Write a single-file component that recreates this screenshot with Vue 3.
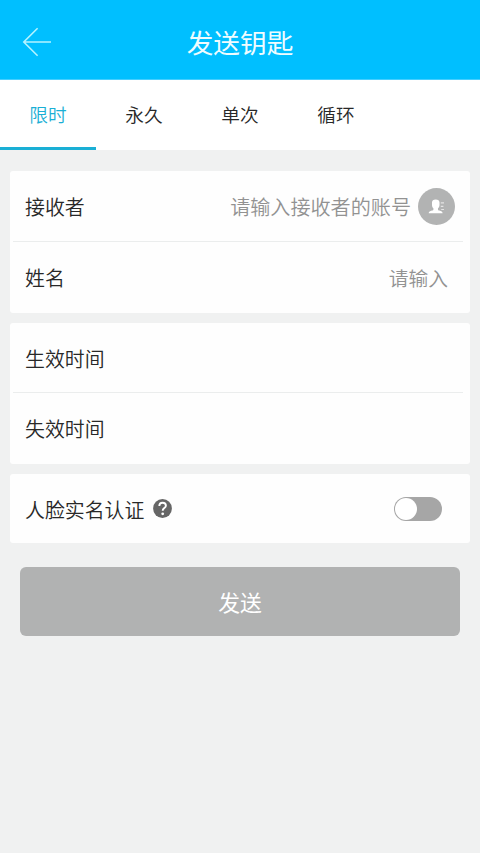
<script setup>
import { ref } from 'vue'

const tabs = ['限时', '永久', '单次', '循环']
const activeTab = ref('限时')
const receiver = ref('')
const fullName = ref('')
const faceAuth = ref(false)
</script>

<template>
  <div class="page">
    <header class="header">
      <button class="back" aria-label="返回">
        <svg width="30" height="30" viewBox="0 0 30 30" fill="none" stroke="#b5f3ff" stroke-width="1.6">
          <path d="M15.6 1.3 1.8 15l13.8 13.7M1.8 15H29" />
        </svg>
      </button>
      <h1 class="title">发送钥匙</h1>
    </header>

    <nav class="tabs">
      <button
        v-for="tab in tabs"
        :key="tab"
        class="tab"
        :class="{ active: tab === activeTab }"
        @click="activeTab = tab"
      >{{ tab }}</button>
    </nav>

    <main class="content">
      <section class="card">
        <label class="row row-first">
          <span class="label">接收者</span>
          <input v-model="receiver" class="field" placeholder="请输入接收者的账号" />
          <span class="contact">
            <svg width="37" height="37" viewBox="0 0 37 37">
              <circle cx="18.5" cy="18.5" r="18.5" fill="#b2b3b3" />
              <path
                d="M14 14.5C14 12.600 15.300 11.500 17.700 11.500S21.500 12.600 21.500 14.500V17C21.500 18.600 20.800 19.600 20 20.300V21.400C20 22 20.500 22.200 21.300 22.500C23.300 23.100 24.600 23.600 24.600 25.300H10.700C10.700 23.600 12 23.100 14 22.500C14.900 22.200 15.400 22 15.400 21.400V20.300C14.600 19.600 14 18.600 14 17Z"
                fill="#fff"
              />
              <path d="M22.800 14.800h3.200M22.800 18.300h2.600M23.200 21.500h2.800" stroke="#e4e4e4" stroke-width="1.200" />
            </svg>
          </span>
        </label>
        <label class="row">
          <span class="label">姓名</span>
          <input v-model="fullName" class="field name-field" placeholder="请输入" />
        </label>
      </section>

      <section class="card time-card">
        <div class="row row-first"><span class="label">生效时间</span></div>
        <div class="row"><span class="label">失效时间</span></div>
      </section>

      <section class="card auth-card">
        <div class="row">
          <span class="label">人脸实名认证</span>
          <svg class="help" width="19" height="19" viewBox="0 0 19 19">
            <circle cx="9.5" cy="9.5" r="9.4" fill="#666" />
            <path
              d="M6.300 7.100c0-2.200 1.300-3.400 3.300-3.400s3.300 1.100 3.300 3c0 2.400-3.200 2.400-3.200 5"
              fill="none" stroke="#fff" stroke-width="1.900"
            />
            <circle cx="9.7" cy="14.8" r="1.4" fill="#fff" />
          </svg>
          <button
            class="switch"
            :class="{ on: faceAuth }"
            role="switch"
            :aria-checked="faceAuth"
            @click="faceAuth = !faceAuth"
          ><span class="knob"></span></button>
        </div>
      </section>

      <button class="submit">发送</button>
    </main>
  </div>
</template>

<style>
body {
  background: #f0f1f1;
}
</style>

<style scoped>
.page {
  min-height: 853px;
  background: #f0f1f1;
  color: #282828;
  font-family: "Noto Sans CJK SC", sans-serif;
  font-weight: 350;
}
button {
  padding: 0;
  border: 0;
  background: none;
  font-family: inherit;
  font-weight: inherit;
  color: inherit;
}
.header {
  display: grid;
  grid-template-columns: 60px 1fr 60px;
  align-items: center;
  box-sizing: border-box;
  height: 80px;
  padding-top: 4px;
  background: #00bfff;
  border-bottom: 1px solid #45ceff;
}
.back {
  display: flex;
  padding-left: 22px;
}
.title {
  margin: 0;
  padding-top: 1px;
  font-size: 26.7px;
  line-height: 40px;
  font-weight: 400;
  text-align: center;
  color: #effcff;
}
.tabs {
  display: flex;
  height: 70px;
  background: #fff;
}
.tab {
  box-sizing: border-box;
  width: 96px;
  border-bottom: 3px solid transparent;
  font-size: 18.7px;
}
.tab.active {
  color: #1aafd5;
  border-bottom-color: #1aafd5;
}
.content {
  display: flex;
  flex-direction: column;
  gap: 10px;
  padding: 21px 10px 0;
}
.card {
  height: 142px;
  border-radius: 3px;
  background: #fefefe;
}
.time-card {
  height: 141px;
}
.auth-card {
  height: 69px;
}
.row {
  display: flex;
  align-items: center;
  box-sizing: border-box;
  height: 70px;
  margin: 0 7px 0 3px;
  padding: 0 5px 0 12px;
}
.row-first {
  height: 71px;
  border-bottom: 1px solid #ebeded;
}
.time-card .row-first {
  height: 70px;
}
.auth-card .row {
  height: 69px;
}
.label {
  padding-top: 2px;
  font-size: 19.9px;
  line-height: 30px;
}
.field {
  flex: 1;
  min-width: 0;
  padding: 2px 0 0;
  border: 0;
  outline: 0;
  background: none;
  font-family: inherit;
  font-size: 20.1px;
  font-weight: 350;
  line-height: 30px;
  text-align: right;
  color: #282828;
}
.field::placeholder {
  color: #929292;
  opacity: 1;
}
.name-field {
  font-size: 19.8px;
  padding-right: 10px;
}
.contact {
  display: flex;
  margin: 0 3px 0 7px;
}
.help {
  margin-left: 8.5px;
}
.switch {
  display: flex;
  box-sizing: border-box;
  width: 48px;
  height: 24px;
  margin: 0 16px 0 auto;
  padding: 1px;
  border-radius: 12px;
  background: #a6a6a6;
}
.switch.on {
  justify-content: flex-end;
  background: #00bfff;
}
.knob {
  width: 22px;
  height: 22px;
  border-radius: 50%;
  background: #fff;
}
.submit {
  height: 69px;
  margin: 14px 10px 0;
  border-radius: 6px;
  background: #b1b2b2;
  color: #fff;
  font-size: 21.8px;
  font-weight: 400;
}
</style>
